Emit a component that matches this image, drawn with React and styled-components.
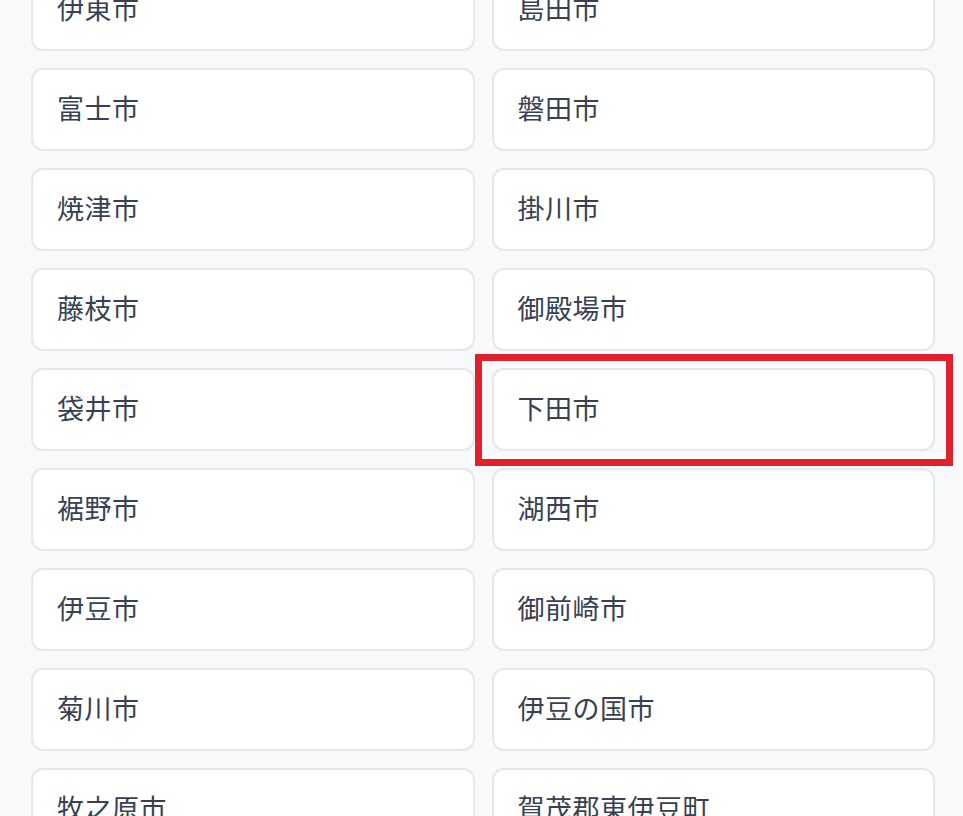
import React from 'react';
import styled, { createGlobalStyle } from 'styled-components';

const GlobalStyle = createGlobalStyle`
  html, body {
    margin: 0;
    padding: 0;
    background: #f8f9fb;
    overflow: hidden;
    height: 816px;
  }
  body {
    font-family: "Noto Sans CJK JP", "Noto Sans", sans-serif;
  }
`;

const Page = styled.div`
  height: 816px;
  overflow: hidden;
  background: #f8f9fb;
`;

const Grid = styled.div`
  display: grid;
  grid-template-columns: 1fr 1fr;
  column-gap: 17px;
  row-gap: 17px;
  padding: 0 28px 0 31px;
  margin-top: -32px;
`;

const Card = styled.div`
  position: relative;
  box-sizing: border-box;
  height: 83px;
  display: flex;
  align-items: center;
  padding: 0 0 4px 24px;
  background: #ffffff;
  border: 2px solid #e5e7eb;
  border-radius: 12px;
  color: #374151;
  font-size: 27px;
  letter-spacing: 0.5px;

  ${(p) =>
    p.$marked &&
    `
    &::after {
      content: '';
      position: absolute;
      top: -16px;
      bottom: -17px;
      left: -19px;
      right: -20px;
      border: 7px solid #e0202b;
      pointer-events: none;
    }
  `}
`;

const cities = [
  '伊東市', '島田市',
  '富士市', '磐田市',
  '焼津市', '掛川市',
  '藤枝市', '御殿場市',
  '袋井市', '下田市',
  '裾野市', '湖西市',
  '伊豆市', '御前崎市',
  '菊川市', '伊豆の国市',
  '牧之原市', '賀茂郡東伊豆町',
];

export default function App() {
  return (
    <Page>
      <GlobalStyle />
      <Grid>
        {cities.map((name) => (
          <Card key={name} $marked={name === '下田市'}>
            {name}
          </Card>
        ))}
      </Grid>
    </Page>
  );
}
